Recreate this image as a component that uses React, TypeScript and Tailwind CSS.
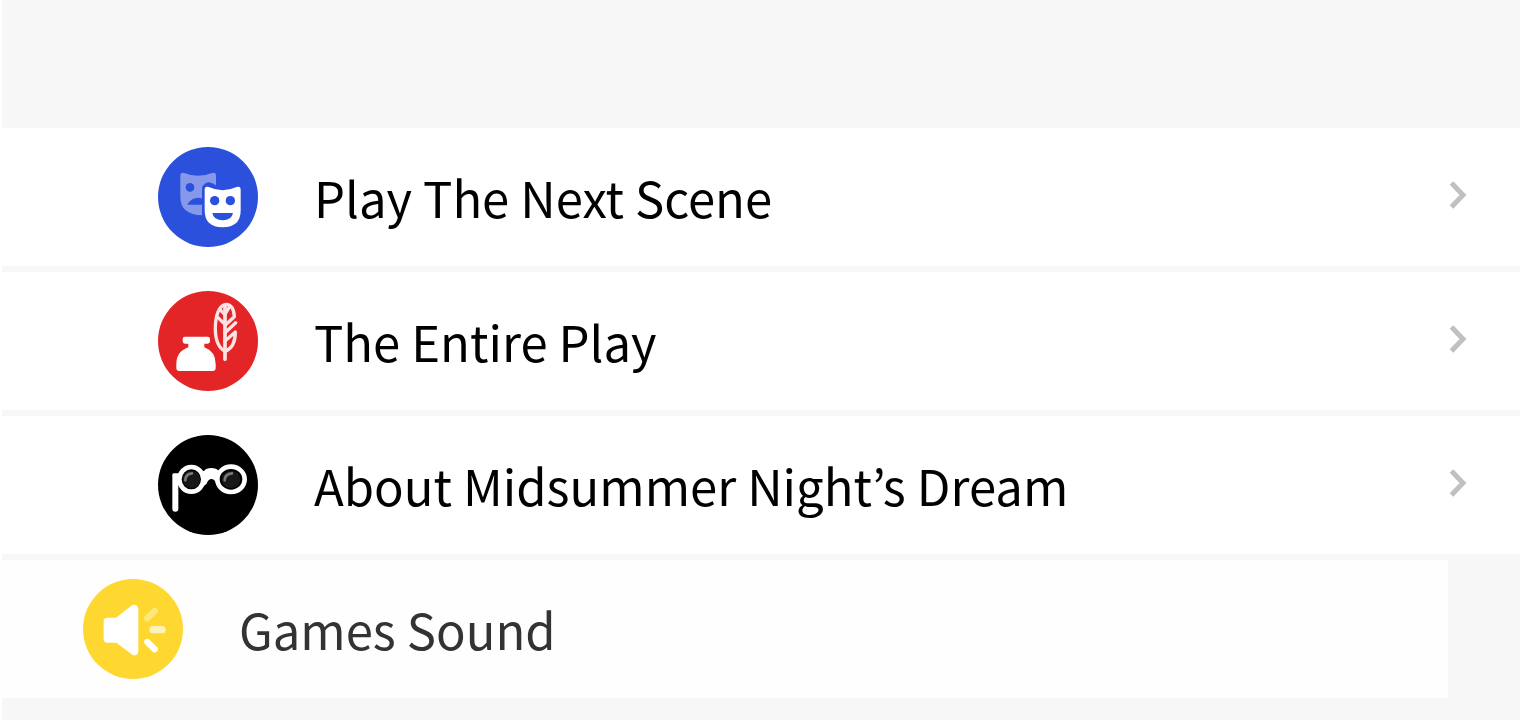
import type { ReactNode } from "react";

function IconDisc({ fill, children }: { fill: string; children: ReactNode }) {
  return (
    <svg viewBox="24 22 300 300" className="size-[100px] shrink-0" aria-hidden="true">
      <circle cx="174" cy="172" r="150" fill={fill} />
      {children}
    </svg>
  );
}

function MasksIcon() {
  return (
    <IconDisc fill="#2b50db">
      <path
        d="M91 108Q91 96 103 100Q144 117 186 100Q198 96 198 108V138H157V227Q91 225 91 172Z"
        fill="#8598ea"
      />
      <circle cx="120" cy="143" r="13" fill="#2b50db" />
      <path d="M112 195Q123 174 145 174Q157 174 162 182V195Z" fill="#2b50db" />
      <path d="M156 230V154Q158 128 177 128Q188 130 200 138V230Z" fill="#2b50db" />
      <path
        d="M164 151Q164 138 176 142Q217 161 260 142Q272 138 272 151V212Q272 263 218 263Q164 263 164 212Z"
        fill="#fff"
      />
      <circle cx="194" cy="183" r="14" fill="#2b50db" />
      <circle cx="241" cy="183" r="14" fill="#2b50db" />
      <path d="M187 220H249Q245 242 218 242Q191 242 187 220Z" fill="#2b50db" />
    </IconDisc>
  );
}

function InkIcon() {
  return (
    <IconDisc fill="#e42527">
      <path
        d="M105 159H173Q180 159 180 166V173Q180 180 173 180H163V191Q197 204 197 241V253Q197 262 188 262H88Q79 262 79 253V241Q79 204 115 191V180H105Q98 180 98 173V166Q98 159 105 159Z"
        fill="#fff"
      />
      <g fill="none" stroke="#fce4e4" strokeWidth="10" strokeLinecap="round" strokeLinejoin="round">
        <path d="M225 203C204 192 196 166 196 134C196 96 208 63 228 62C243 63 252 76 253 99L226 124" />
        <path d="M225 227V66" strokeWidth="11" />
        <path d="M200 98L225 122M209 77L225 93M239 69L225 91M225 147L257 117M225 172L256 145C256 174 249 194 225 203" />
      </g>
    </IconDisc>
  );
}

function GlassesIcon() {
  return (
    <IconDisc fill="#000">
      <path
        d="M146 126Q156 132 163 129Q168 121 184 121Q200 121 205 129Q213 132 222 126V175Q205 178 199 168Q194 154 184 154Q175 154 170 168Q161 178 146 175Z"
        fill="#fff"
      />
      <path d="M76 147V243" stroke="#fff" strokeWidth="18" strokeLinecap="round" />
      <path d="M67 141Q67 137 73 137H91V163L76 180Z" fill="#fff" />
      <ellipse cx="124" cy="155" rx="36" ry="37" fill="#000" stroke="#fff" strokeWidth="14" />
      <ellipse cx="243" cy="155" rx="41" ry="38" fill="#000" stroke="#fff" strokeWidth="14" />
      <ellipse cx="124" cy="155" rx="26" ry="26" fill="#171717" />
      <ellipse cx="243" cy="155" rx="28" ry="26" fill="#171717" />
      <path
        d="M106 158Q106 139 126 137M224 158Q224 139 246 137"
        fill="none"
        stroke="#777"
        strokeWidth="8"
        strokeLinecap="round"
      />
    </IconDisc>
  );
}

function SoundIcon() {
  return (
    <IconDisc fill="#fed830">
      <path
        d="M97 138H123L169 102Q177 97 184 101Q190 105 190 113V238Q190 247 183 250Q177 253 170 248L124 213H97Q86 213 86 202V149Q86 138 97 138Z"
        fill="#fff"
      />
      <g strokeWidth="19" strokeLinecap="round">
        <path d="M217 140L239 118" stroke="#ffe77f" />
        <path d="M234 174H261" stroke="#fff1bb" strokeWidth="22" />
        <path d="M217 211L239 233" stroke="#fff" />
      </g>
    </IconDisc>
  );
}

function Chevron() {
  return (
    <svg viewBox="0 0 18 30" className="mb-1 h-[30px] w-[18px] shrink-0" aria-hidden="true">
      <path d="M2.5 3L14 15L2.5 27" fill="none" stroke="#c0c0c0" strokeWidth="5" />
    </svg>
  );
}

const scenes = [
  { label: "Play The Next Scene", href: "#scene", icon: <MasksIcon /> },
  { label: "The Entire Play", href: "#play", icon: <InkIcon /> },
  { label: "About Midsummer Night’s Dream", href: "#about", icon: <GlassesIcon /> },
];

export default function App() {
  return (
    <main className="min-h-screen border-l-2 border-white bg-[#f7f7f7] pt-32 font-['Noto_Sans_CJK_KR',sans-serif] text-[49px] leading-[76px] text-black">
      <nav className="flex flex-col gap-1.5">
        {scenes.map(({ label, href, icon }) => (
          <a
            key={label}
            href={href}
            className="flex h-[138px] items-center gap-14 bg-white pr-[53px] pl-[156px]"
          >
            {icon}
            <span className="flex-1 whitespace-nowrap">{label}</span>
            <Chevron />
          </a>
        ))}
      </nav>
      <button
        type="button"
        className="mt-1.5 flex h-[138px] w-[calc(100%-72px)] items-center gap-14 bg-[#fefefe] pl-[81px] text-left text-[#333]"
      >
        <SoundIcon />
        <span className="whitespace-nowrap">Games Sound</span>
      </button>
    </main>
  );
}
